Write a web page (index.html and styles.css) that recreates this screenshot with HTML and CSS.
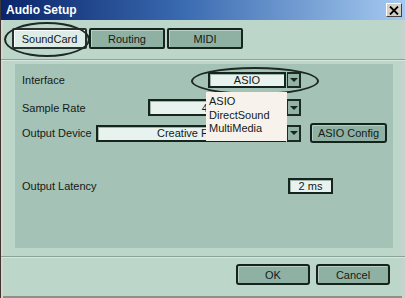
FILE: index.html
```html
<!DOCTYPE html>
<html>
<head>
<meta charset="utf-8">
<link rel="stylesheet" href="styles.css">
</head>
<body>
<div class="win">
  <div class="titlebar">
    <span class="title">Audio Setup</span>
    <span class="close"><svg width="10" height="9" viewBox="0 0 10 9"><path d="M1 0.5 L9 8.5 M9 0.5 L1 8.5" stroke="#000" stroke-width="1.8"/></svg></span>
  </div>
  <div class="tabs">
    <div class="tab active">SoundCard</div>
    <div class="tab">Routing</div>
    <div class="tab">MIDI</div>
  </div>
  <div class="sep"></div>
  <div class="panel">
    <div class="row r1">
      <span class="label">Interface</span>
      <div class="combo c-iface">
        <div class="field">ASIO</div>
        <div class="arrow"><i></i></div>
      </div>
    </div>
    <div class="row r2">
      <span class="label">Sample Rate</span>
      <div class="combo c-rate">
        <div class="field">44100</div>
        <div class="arrow"><i></i></div>
      </div>
    </div>
    <div class="row r3">
      <span class="label">Output Device</span>
      <div class="combo c-dev">
        <div class="field left">Creative FX Device</div>
        <div class="arrow"><i></i></div>
      </div>
      <div class="btn asio">ASIO Config</div>
    </div>
    <div class="row r4">
      <span class="label">Output Latency</span>
      <div class="field latency">2 ms</div>
    </div>
  </div>
  <div class="sep sep2"></div>
  <div class="footer">
    <div class="btn ok">OK</div>
    <div class="btn cancel">Cancel</div>
  </div>

  <div class="ring ring-tab"></div>
  <div class="ring ring-iface"></div>
  <div class="list">
    <div>ASIO</div>
    <div>DirectSound</div>
    <div>MultiMedia</div>
  </div>
</div>
</body>
</html>
```
FILE: styles.css
```css
* { box-sizing: border-box; }
html, body { margin: 0; padding: 0; }
body {
  width: 405px;
  height: 298px;
  overflow: hidden;
  background: #bcd6ca;
  font-family: "Liberation Sans", Arial, sans-serif;
  font-size: 11px;
  color: #141a17;
}
.win {
  position: relative;
  width: 405px;
  height: 298px;
  border-left: 1px solid #3d3733;
  box-shadow: inset 2px 0 #d6d6cc, inset -3px 0 #c9d3cc, inset 0 -2px #8c8f8a;
  display: flex;
  flex-direction: column;
}
.titlebar {
  height: 20px;
  background: linear-gradient(to right, #0a246a 0%, #3a6ab0 45%, #a6caf0 100%);
  display: flex;
  align-items: center;
  padding-left: 5px;
  padding-right: 3px;
}
.title {
  color: #fff;
  font-weight: bold;
  font-size: 12px;
  font-family: "Liberation Sans", Arial, sans-serif;
  flex: 1;
}
.close {
  width: 16px;
  height: 14px;
  background: #d4d0c8;
  border-top: 1px solid #fff;
  border-left: 1px solid #fff;
  border-right: 1px solid #404040;
  border-bottom: 1px solid #404040;
  display: flex;
  align-items: center;
  justify-content: center;
}
.tabs {
  display: flex;
  gap: 2px;
  padding-left: 11px;
  margin-top: 8px;
}
.tab {
  width: 76px;
  height: 21px;
  border: 2px solid #16241e;
  border-radius: 2px;
  background: #8fb1a4;
  display: flex;
  align-items: center;
  justify-content: center;
  box-shadow: inset 1px 1px #b9d0c6;
}
.tab.active {
  width: 75px;
  background: #ddece6;
  border-color: #24332d;
  box-shadow: inset 1px 1px #fff;
}
.sep {
  height: 2px;
  margin-top: 10px;
  border-top: 1px solid #8aa398;
  border-bottom: 1px solid #d7e7e0;
}
.panel {
  margin-top: 3px;
  margin-left: 14px;
  width: 378px;
  height: 184px;
  background: #a4c2b6;
  padding-top: 8px;
  display: flex;
  flex-direction: column;
}
.row {
  display: flex;
  align-items: center;
}
.label {
  width: 77px;
  padding-left: 7px;
  flex: none;
  white-space: nowrap;
}
.r1 { height: 16px; }
.r2 { height: 17px; margin-top: 11px; }
.r3 { height: 20px; margin-top: 7px; }
.r4 { height: 16px; margin-top: 35px; }
.combo {
  display: flex;
  height: 100%;
}
.r3 .combo { height: 17px; }
.field {
  height: 100%;
  background: #e8f2ee;
  border: 2px solid #16241e;
  display: flex;
  align-items: center;
  justify-content: center;
  overflow: hidden;
  white-space: nowrap;
  box-shadow: inset 1px 1px #9fb5ab;
}
.field.left {
  justify-content: flex-start;
  padding-left: 59px;
}
.arrow {
  width: 14px;
  height: 100%;
  margin-left: 1px;
  background: #94b3a7;
  border: 2px solid #1c2a24;
  border-left-width: 1px;
  display: flex;
  align-items: center;
  justify-content: center;
}
.arrow i {
  width: 0;
  height: 0;
  border-left: 4px solid transparent;
  border-right: 4px solid transparent;
  border-top: 4px solid #1a2520;
}
.c-iface { margin-left: 116px; }
.c-iface .field { width: 78px; }
.c-rate { margin-left: 56px; }
.c-rate .field { width: 138px; }
.c-dev { margin-left: 4px; }
.c-dev .field { width: 190px; }
.btn {
  height: 21px;
  width: 74px;
  border: 2px solid #15231d;
  border-radius: 3px;
  background: #8fb1a4;
  box-shadow: inset 1px 1px #b7cec4;
  display: flex;
  align-items: center;
  justify-content: center;
}
.btn.asio {
  margin-left: 9px;
  width: 77px;
  height: 20px;
}
.latency {
  margin-left: 196px;
  width: 45px;
  height: 16px;
}
.sep2 { margin-top: 8px; }
.footer {
  display: flex;
  justify-content: flex-end;
  gap: 6px;
  padding-right: 15px;
  margin-top: 6px;
}
.ring {
  position: absolute;
  border: 2px solid #1e2925;
  border-radius: 50%;
  pointer-events: none;
}
.ring-tab {
  left: 3px;
  top: 22px;
  width: 86px;
  height: 35px;
}
.ring-iface {
  left: 190px;
  top: 67px;
  width: 128px;
  height: 28px;
}
.list {
  position: absolute;
  left: 205px;
  top: 92px;
  width: 81px;
  height: 49px;
  background: #f7f3ec;
  padding-top: 3px;
  padding-left: 3px;
  line-height: 13.5px;
}
```
